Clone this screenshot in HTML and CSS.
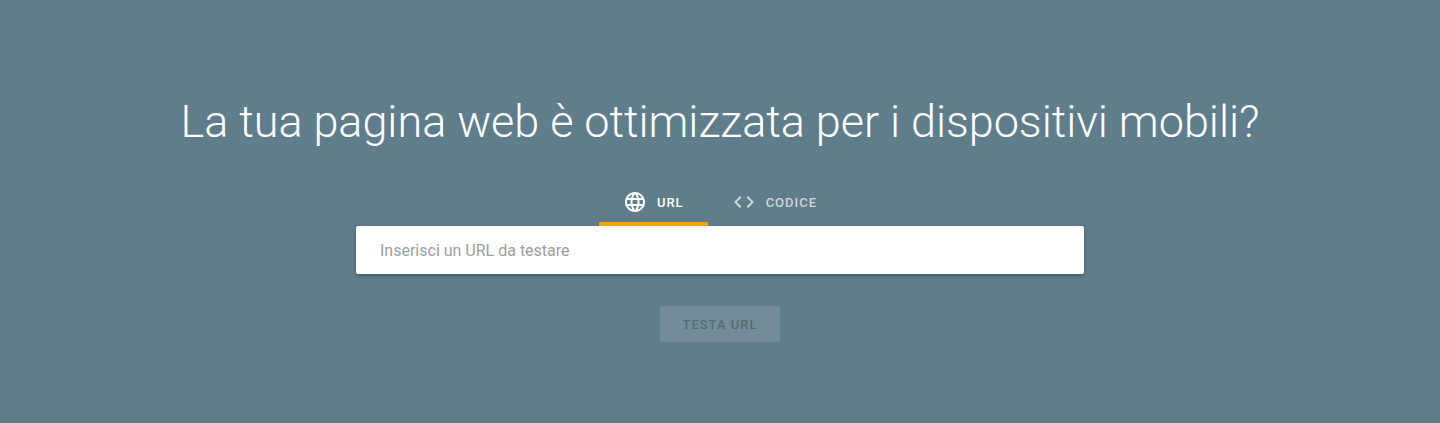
FILE: index.html
```html
<!DOCTYPE html>
<html lang="it">
<head>
<meta charset="utf-8">
<title>Test di ottimizzazione mobile</title>
<link rel="stylesheet" href="styles.css">
</head>
<body>
<main class="hero">
  <h1 class="title">La tua pagina web è ottimizzata per i dispositivi mobili?</h1>
  <div class="tabs">
    <div class="tab tab-active">
      <svg class="tab-icon" viewBox="0 0 24 24"><path fill="currentColor" d="M11.99 2C6.47 2 2 6.48 2 12s4.47 10 9.99 10C17.52 22 22 17.52 22 12S17.52 2 11.99 2zm6.93 6h-2.95c-.32-1.25-.78-2.45-1.38-3.56 1.84.63 3.37 1.91 4.33 3.56zM12 4.04c.83 1.2 1.48 2.53 1.91 3.96h-3.82c.43-1.43 1.08-2.76 1.91-3.96zM4.26 14C4.1 13.36 4 12.69 4 12s.1-1.36.26-2h3.38c-.08.66-.14 1.32-.14 2 0 .68.06 1.34.14 2H4.26zm.82 2h2.95c.32 1.25.78 2.45 1.38 3.56-1.84-.63-3.37-1.9-4.33-3.56zm2.95-8H5.08c.96-1.66 2.49-2.93 4.33-3.56C8.81 5.55 8.35 6.75 8.03 8zM12 19.96c-.83-1.2-1.48-2.53-1.91-3.96h3.82c-.43 1.43-1.08 2.76-1.91 3.96zM14.34 14H9.66c-.09-.66-.16-1.32-.16-2 0-.68.07-1.35.16-2h4.68c.09.65.16 1.32.16 2 0 .68-.07 1.34-.16 2zm.25 5.56c.6-1.11 1.06-2.31 1.38-3.56h2.95c-.96 1.65-2.49 2.93-4.33 3.56zM16.36 14c.08-.66.14-1.32.14-2 0-.68-.06-1.34-.14-2h3.38c.16.64.26 1.31.26 2s-.1 1.36-.26 2h-3.38z"/></svg>
      <span>URL</span>
    </div>
    <div class="tab">
      <svg class="tab-icon" viewBox="0 0 24 24"><path fill="currentColor" d="M9.4 16.6 4.8 12l4.6-4.6L8 6l-6 6 6 6 1.4-1.4zm5.2 0 4.6-4.6-4.6-4.6L16 6l6 6-6 6-1.4-1.4z"/></svg>
      <span>CODICE</span>
    </div>
  </div>
  <div class="field"><span class="placeholder">Inserisci un URL da testare</span></div>
  <div class="button">TESTA URL</div>
</main>
</body>
</html>
```
FILE: styles.css
```css
* { box-sizing: border-box; }
html, body { margin: 0; height: 100%; }
body { background: #607d8b; font-family: Roboto, "Liberation Sans", sans-serif; }
.hero { height: 423px; padding-top: 92px; display: flex; flex-direction: column; align-items: center; overflow: hidden; }
.title { margin: 0; font-size: 45px; line-height: 60px; font-weight: 300; letter-spacing: -.035px; color: #fff; white-space: nowrap; }
.tabs { margin-top: 26px; display: flex; height: 48px; }
.tab { position: relative; height: 48px; padding: 0 24px; display: flex; align-items: center; gap: 10px; font-size: 13px; font-weight: 500; letter-spacing: 1px; color: rgba(255,255,255,.7); }
.tab-active { color: #fff; }
.tab-active::after { content: ""; position: absolute; left: 0; right: 0; bottom: 0; height: 4px; background: #f6a30f; border-radius: 1px 1px 0 0; }
.tab-icon { width: 24px; height: 24px; flex: none; }
.field { width: 728px; height: 48px; padding: 0 24px; display: flex; align-items: center; background: #fff; border-radius: 2px; box-shadow: 0 2px 4px rgba(0,0,0,.3); }
.placeholder { font-size: 16px; color: #9e9e9e; }
.button { margin-top: 32px; width: 120px; height: 36px; display: flex; align-items: center; justify-content: center; background: rgba(255,255,255,.12); border-radius: 2px; font-size: 13px; font-weight: 500; letter-spacing: 1px; color: rgba(0,0,0,.26); }
```
